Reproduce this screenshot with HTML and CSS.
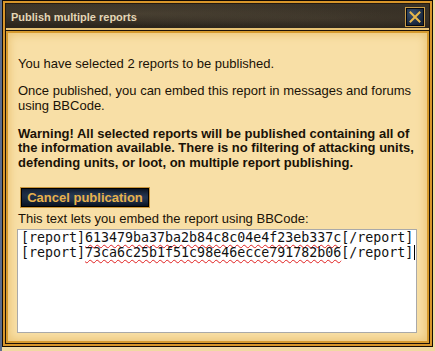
FILE: index.html
```html
<!DOCTYPE html>
<html>
<head>
<meta charset="utf-8">
<link rel="stylesheet" href="styles.css">
</head>
<body>
<div class="window">
  <div class="titlebar">
    <span class="title">Publish multiple reports</span>
    <span class="close">
      <svg width="18" height="18" viewBox="0 0 18 18"><path d="M4.5 4.5 L13.5 13.5 M13.5 4.5 L4.5 13.5" stroke="#e9b84a" stroke-width="2" stroke-linecap="square" fill="none"/></svg>
    </span>
  </div>
  <div class="panel">
    <p>You have selected 2 reports to be published.</p>
    <p>Once published, you can embed this report in messages and forums using BBCode.</p>
    <p class="warn">Warning! All selected reports will be published containing all of the information available. There is no filtering of attacking units, defending units, or loot, on multiple report publishing.</p>
    <div class="actions"><span class="btn">Cancel publication</span></div>
    <div class="label">This text lets you embed the report using BBCode:</div>
    <div class="codebox"><div>[report]<span class="sp">613479ba37ba2b84c8c04e4f23eb337c</span>[/report]</div><div>[report]<span class="sp">73ca6c25b1f51c98e46ecce791782b06</span>[/report]<span class="caret"></span></div></div>
  </div>
</div>
</body>
</html>
```
FILE: styles.css
```css
html, body {
  margin: 0;
  padding: 0;
}
body {
  width: 435px;
  height: 351px;
  overflow: hidden;
  background: linear-gradient(to right, #5b6c8c 0, #5b6c8c 2px, #f1d9a2 2px);
  font-family: "Liberation Sans", Arial, sans-serif;
}
.window {
  margin-left: 2px;
  width: 431px;
  height: 347px;
  box-sizing: border-box;
  border: 1px solid #120b04;
  background: #23190e;
  box-shadow: inset 0 0 0 2px #d8962a;
  padding: 3px 3px 3px 3px;
  display: flex;
  flex-direction: column;
}
.titlebar {
  height: 24px;
  flex: none;
  display: flex;
  align-items: center;
  justify-content: space-between;
  padding: 0 4px 0 5px;
  background:
    radial-gradient(ellipse at 30% 40%, rgba(90,80,62,0.5), rgba(0,0,0,0) 60%),
    radial-gradient(ellipse at 75% 60%, rgba(80,70,55,0.45), rgba(0,0,0,0) 55%),
    linear-gradient(#3a3328, #2a241c);
  border-bottom: 2px solid #e6c275;
  margin-bottom: 1px;
}
.title {
  color: #e4d6b6;
  font-weight: bold;
  font-size: 11px;
  margin-top: 1px;
}
.close {
  width: 18px;
  height: 18px;
  border: 1px solid #c99c48;
  box-shadow: inset 0 0 0 1px #05080d;
  background: radial-gradient(circle at 35% 30%, #3a5272, #16243a 70%);
  display: flex;
  margin-top: 2px;
}
.panel {
  flex: 1;
  border: 2px solid #d69b30;
  outline: 1px solid #1c1208;
  background: #f8dfa6;
  box-shadow: inset 0 0 9px 2px #ebc67a;
  padding: 10px 10px 0 10px;
  font-size: 13px;
  line-height: 14.4px;
  color: #1a1206;
}
.panel p {
  margin: 13.5px 0;
}
.warn {
  font-weight: bold;
}
.actions {
  margin-top: 17.3px;
  padding-left: 2px;
  display: flex;
}
.btn {
  height: 19px;
  width: 128px;
  border: 1px solid #c8953a;
  box-shadow: inset 0 0 0 1px #000;
  background:
    radial-gradient(ellipse at 80% 50%, rgba(70,100,140,0.55), rgba(0,0,0,0) 60%),
    radial-gradient(ellipse at 20% 40%, rgba(60,90,130,0.45), rgba(0,0,0,0) 60%),
    #0c1626;
  color: #e7b14c;
  font-weight: bold;
  font-size: 13px;
  line-height: 19px;
  text-align: center;
}
.label {
  margin-top: 4px;
}
.codebox {
  margin-top: 2px;
  margin-left: -1px;
  width: 400px;
  height: 104px;
  box-sizing: border-box;
  border: 1px solid #a9a9a9;
  background: #ffffff;
  padding: 1px 3px;
  font-family: "DejaVu Sans Mono", monospace;
  font-size: 13.3px;
  line-height: 14.6px;
  color: #111;
  white-space: nowrap;
}
.sp {
  text-decoration: underline wavy #e02020;
  text-decoration-thickness: 1px;
  text-underline-offset: 2px;
}
.caret {
  display: inline-block;
  width: 1px;
  height: 15px;
  background: #000;
  vertical-align: -3px;
  margin-left: 1px;
}
```
